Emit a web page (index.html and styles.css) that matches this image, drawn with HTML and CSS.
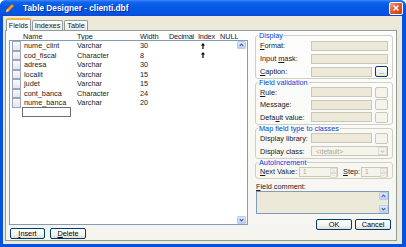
FILE: index.html
```html
<!DOCTYPE html>
<html>
<head>
<meta charset="utf-8">
<title>Table Designer</title>
<link rel="stylesheet" href="styles.css">
</head>
<body>
<div class="window">
  <div class="titlebar">
    <svg class="appicon" viewBox="0 0 10 10"><path d="M1 9 L2 6 L7 1 L9 3 L4 8 Z" fill="#F59A14" stroke="#B45A06" stroke-width="0.6"/><path d="M2 6 L4 8 L1 9 Z" fill="#FBE38A"/></svg>
    <span class="title">Table Designer - clienti.dbf</span>
    <div class="close"><svg viewBox="0 0 8 8" class="closex"><path d="M1.5 1.5 L6.5 6.5 M6.5 1.5 L1.5 6.5" stroke="#fff" stroke-width="1.5"/></svg></div>
  </div>
  <div class="client">
    <div class="tabs">
      <div class="tab active t1">Fields</div>
      <div class="tab t2">Indexes</div>
      <div class="tab t3">Table</div>
    </div>
    <div class="tabpage">
      <div class="leftcol">
        <div class="hdr">
          <span class="h-name">Name</span><span class="c-type">Type</span><span class="c-width">Width</span><span class="h-dec">Decimal</span><span class="h-idx">Index</span><span class="c-null">NULL</span>
        </div>
        <div class="list">
          <div class="rows">
            <div class="row"><span class="chk"></span><span class="c-name">nume_clint</span><span class="c-type">Varchar</span><span class="c-width">30</span><span class="c-dec"></span><span class="c-idx"><svg class="arrow" viewBox="0 0 4 6"><path d="M2 0 L4 2.5 H2.6 V6 H1.4 V2.5 H0 Z" fill="#000"/></svg></span></div>
            <div class="row"><span class="chk"></span><span class="c-name">cod_fiscal</span><span class="c-type">Character</span><span class="c-width">8</span><span class="c-dec"></span><span class="c-idx"><svg class="arrow" viewBox="0 0 4 6"><path d="M2 0 L4 2.5 H2.6 V6 H1.4 V2.5 H0 Z" fill="#000"/></svg></span></div>
            <div class="row"><span class="chk"></span><span class="c-name">adresa</span><span class="c-type">Varchar</span><span class="c-width">30</span></div>
            <div class="row"><span class="chk"></span><span class="c-name">localit</span><span class="c-type">Varchar</span><span class="c-width">15</span></div>
            <div class="row"><span class="chk"></span><span class="c-name">judet</span><span class="c-type">Varchar</span><span class="c-width">15</span></div>
            <div class="row"><span class="chk"></span><span class="c-name">cont_banca</span><span class="c-type">Character</span><span class="c-width">24</span></div>
            <div class="row"><span class="chk"></span><span class="c-name">nume_banca</span><span class="c-type">Varchar</span><span class="c-width">20</span></div>
            <div class="row"><span class="newinput"></span></div>
          </div>
          <div class="vscroll">
            <div class="sbtn"><svg viewBox="0 0 8 8"><path d="M2 5 L4 3 L6 5" fill="none" stroke="#4D6185" stroke-width="1.3"/></svg></div>
            <div class="sbtn"><svg viewBox="0 0 8 8"><path d="M2 3 L4 5 L6 3" fill="none" stroke="#4D6185" stroke-width="1.3"/></svg></div>
          </div>
        </div>
        <div class="btnrow">
          <button class="btn b-ins"><u>I</u>nsert</button>
          <button class="btn b-del"><u>D</u>elete</button>
        </div>
      </div>
      <div class="rightcol">
        <fieldset class="grp g-display">
          <legend>Display</legend>
          <div class="frow"><label><u>F</u>ormat:</label><span class="inp full"></span></div>
          <div class="frow"><label>Input <u>m</u>ask:</label><span class="inp full"></span></div>
          <div class="frow"><label><u>C</u>aption:</label><span class="inp short"></span><span class="ell">...</span></div>
        </fieldset>
        <fieldset class="grp g-valid">
          <legend>Field validation</legend>
          <div class="frow r125"><label><u>R</u>ule:</label><span class="inp short"></span><span class="ell dis"></span></div>
          <div class="frow r125"><label>Message:</label><span class="inp short"></span><span class="ell dis"></span></div>
          <div class="frow r125"><label>Defa<u>u</u>lt value:</label><span class="inp short"></span><span class="ell dis"></span></div>
        </fieldset>
        <fieldset class="grp g-map">
          <legend>Map field type to classes</legend>
          <div class="frow"><label>Display library:</label><span class="inp short"></span><span class="ell dis"></span></div>
          <div class="frow"><label>Display class:</label><span class="combo"><span class="ctext">&lt;default&gt;</span><span class="cbtn"><svg viewBox="0 0 8 8"><path d="M2 3 L4 5 L6 3" fill="none" stroke="#C9C7BA" stroke-width="1.2"/></svg></span></span></div>
        </fieldset>
        <fieldset class="grp g-auto">
          <legend>AutoIncrement</legend>
          <div class="frow r12"><label class="lnext"><u>N</u>ext Value:</label><span class="spin s-next"><span class="stext">1</span><span class="sarrows"><span class="sa"><svg viewBox="0 0 6 4"><path d="M1.5 3 L3 1.5 L4.5 3" fill="none" stroke="#C9C7BA" stroke-width="0.9"/></svg></span><span class="sa"><svg viewBox="0 0 6 4"><path d="M1.5 1 L3 2.5 L4.5 1" fill="none" stroke="#C9C7BA" stroke-width="0.9"/></svg></span></span></span><label class="lstep"><u>S</u>tep:</label><span class="spin s-step"><span class="stext">1</span><span class="sarrows"><span class="sa"><svg viewBox="0 0 6 4"><path d="M1.5 3 L3 1.5 L4.5 3" fill="none" stroke="#C9C7BA" stroke-width="0.9"/></svg></span><span class="sa"><svg viewBox="0 0 6 4"><path d="M1.5 1 L3 2.5 L4.5 1" fill="none" stroke="#C9C7BA" stroke-width="0.9"/></svg></span></span></span></div>
        </fieldset>
        <div class="fclabel"><u>F</u>ield comment:</div>
        <div class="comment">
          <div class="vscroll cs">
            <div class="sbtn"><svg viewBox="0 0 8 8"><path d="M2 5 L4 3 L6 5" fill="none" stroke="#4D6185" stroke-width="1.3"/></svg></div>
            <div class="sbtn"><svg viewBox="0 0 8 8"><path d="M2 3 L4 5 L6 3" fill="none" stroke="#4D6185" stroke-width="1.3"/></svg></div>
          </div>
        </div>
        <div class="okrow">
          <button class="btn b-ok">OK</button>
          <button class="btn b-cancel">Cancel</button>
        </div>
      </div>
    </div>
  </div>
</div>
</body>
</html>
```

FILE: styles.css
```css
* { box-sizing: border-box; }
html, body { margin: 0; padding: 0; }
body {
  width: 406px; height: 247px; overflow: hidden; background: #fff;
  font-family: "Liberation Sans", Arial, sans-serif; font-size: 7.3px; color: #1A1A1A;
}
u { text-decoration: underline; text-underline-offset: 1px; }

.window {
  width: 406px; height: 247px; display: flex; flex-direction: column;
  background: #0552E0; border-radius: 6px 6px 0 0; overflow: hidden;
}
.titlebar {
  height: 16px; flex: none; display: flex; align-items: center; padding: 0 3px 0 5px;
  background: linear-gradient(#3D8BF8 0%, #0F63EC 14%, #0558E6 45%, #0455E3 80%, #0A4AD0 100%);
}
.appicon { width: 10px; height: 10px; flex: none; }
.title {
  flex: 1; margin-left: 8px; color: #fff; font-weight: bold; font-size: 8.3px;
  text-shadow: 1px 1px 0 #0B2A9C; white-space: nowrap;
}
.close {
  width: 14px; height: 13px; flex: none; border: 1px solid #fff; border-radius: 2px;
  background: linear-gradient(135deg, #F3A58A, #E2582F 45%, #C7401C);
  display: flex; align-items: center; justify-content: center;
}
.closex { width: 8px; height: 8px; }

.client {
  flex: 1; margin: 0 4px 3px 3px; background: #ECE9D8;
  display: flex; flex-direction: column; padding: 2px 5px 3px 2px;
}
.tabs { height: 12px; flex: none; display: flex; align-items: flex-end; padding-left: 1px; }
.tab {
  height: 10px; border: 1px solid #919B9C; border-bottom: none; border-radius: 2px 2px 0 0;
  background: linear-gradient(#FFFFFF, #ECEBE6); display: flex; align-items: center; justify-content: center;
  margin-right: 1px;
}
.tab.active {
  height: 13px; margin-bottom: -1px; background: #FCFCFE; border-top: 2px solid #F8B43C;
  position: relative; z-index: 1; padding-bottom: 1px;
}
.t1 { width: 25px; }
.t2 { width: 31px; }
.t3 { width: 24px; }

.tabpage {
  flex: 1; border: 1px solid #919B9C; display: flex;
  background: linear-gradient(#FDFDFE, #F5F4EF);
}
.leftcol { width: 242px; flex: none; display: flex; flex-direction: column; padding-left: 3px; }
.hdr { height: 7px; margin-top: 2px; line-height: 7px; display: flex; padding-left: 14px; white-space: nowrap; }
.h-name { width: 54px; }
.h-dec { width: 28px; letter-spacing: -0.2px; }
.h-idx { width: 23px; padding-left: 1px; letter-spacing: -0.2px; }
.c-name { width: 53px; margin-left: 3px; }
.c-type { width: 63px; }
.c-width { width: 29px; }
.c-dec { width: 28px; }
.c-idx { width: 23px; padding-left: 4px; display: flex; align-items: center; }
.c-null { width: 20px; }

.list {
  height: 185px; flex: none; border: 1px solid #7F9DB9; background: #fff; display: flex;
}
.rows { flex: 1; display: flex; flex-direction: column; }
.row { height: 9.5px; display: flex; align-items: center; white-space: nowrap; }
.chk {
  width: 9px; height: 9.5px; margin-left: 2px; flex: none;
  border: 1px solid #9AA6B8; background: linear-gradient(#F8F9FB, #E2E6EE);
}
.arrow { width: 4px; height: 6px; }
.newinput { width: 49px; height: 10px; margin-left: 12px; border: 1px solid #6F6F6F; background: #fff; }

.vscroll { width: 10px; display: flex; flex-direction: column; justify-content: space-between; padding: 0 1px 0 0; }
.sbtn {
  width: 9px; height: 8px; border: 1px solid #B8CBF4; border-radius: 1px;
  background: linear-gradient(#DCE7FE, #BACEF9); display: flex; align-items: center; justify-content: center;
}
.sbtn svg { width: 8px; height: 8px; }

.btnrow { display: flex; margin-top: 3px; padding-left: 1px; gap: 5px; }
.btn {
  height: 11px; padding: 0; font: inherit; color: #000;
  border: 1px solid #003C74; border-radius: 2px;
  background: linear-gradient(#FFFFFF, #F4F4F0 60%, #E0DDD3);
  display: flex; align-items: center; justify-content: center;
}
.b-ins { width: 35px; }
.b-del { width: 36px; }

.rightcol { flex: 1; margin-left: 7px; padding: 1px 3px 0 0; display: flex; flex-direction: column; }
fieldset.grp {
  margin: 0; padding: 0 3px 0 4px; min-width: 0;
  border: 1px solid #D0D0BF; border-radius: 3px;
}
legend { padding: 0 1px; margin-left: -2px; line-height: 7px; height: 7px; color: #0046D5; white-space: nowrap; }
.g-display { padding-bottom: 1px; }
.g-valid { padding-bottom: 1px; }
.g-map { margin-top: 3px; padding-top: 3px; padding-bottom: 1.5px; }
.g-auto { margin-top: 0.5px; padding-top: 0.5px; }

.frow { height: 13px; display: flex; align-items: center; white-space: nowrap; }
.frow.r125 { height: 12.5px; }
.frow.r12 { height: 12px; }
.frow label { width: 51px; flex: none; }
.inp { height: 10px; border: 1px solid #C9C7BA; background: #ECE9D8; flex: none; }
.inp.full { width: 77px; }
.inp.short { width: 61px; }
.ell {
  width: 13px; height: 11px; margin-left: 3px; flex: none;
  border: 1px solid #003C74; border-radius: 2px; background: linear-gradient(#FFFFFF, #E6E3DA);
  display: flex; align-items: center; justify-content: center; font-size: 6px; line-height: 6px;
}
.ell.dis { border-color: #C9C7BA; background: #F5F4EA; }

.combo { width: 77px; height: 10px; border: 1px solid #C9C7BA; background: #F5F4EA; display: flex; align-items: center; }
.ctext { flex: 1; color: #ACA899; padding-left: 4px; font-size: 6.5px; }
.cbtn { width: 9px; height: 8px; margin-right: 0; border: 1px solid #E0DED4; background: #F3F2EC; display: flex; align-items: center; justify-content: center; }
.cbtn svg { width: 7px; height: 7px; }

.frow label.lnext { width: 39px; }
.frow label.lstep { width: 18px; margin-left: 5px; }
.spin { height: 10px; border: 1px solid #C9C7BA; background: #F5F4EA; display: flex; flex: none; }
.s-next { width: 39px; }
.s-step { width: 27px; }
.stext { flex: 1; color: #ACA899; padding-left: 3px; line-height: 8px; font-size: 6.5px; }
.sarrows { width: 7px; display: flex; flex-direction: column; }
.sa { flex: 1; border: 1px solid #E0DED4; background: #F3F2EC; display: flex; align-items: center; justify-content: center; }
.sa svg { width: 5px; height: 3px; }

.fclabel { margin-top: 4px; height: 8px; line-height: 8px; padding-left: 1px; }
.comment {
  height: 23px; margin-left: 1px; width: 133px; border: 1px solid #7F9DB9; background: #ECE9D8;
  display: flex; justify-content: flex-end;
}
.vscroll.cs { padding: 0; width: 9px; }
.okrow { margin-top: 5px; display: flex; justify-content: flex-end; gap: 3px; padding-right: 2px; }
.b-ok { width: 36px; }
.b-cancel { width: 36px; }
```
